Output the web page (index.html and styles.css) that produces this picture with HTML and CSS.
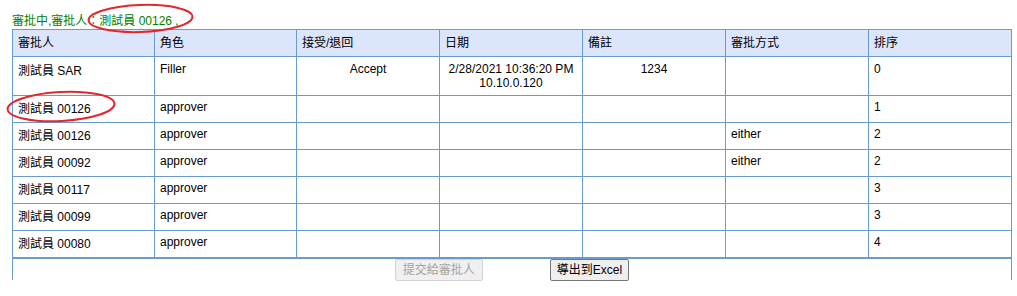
FILE: index.html
```html
<!DOCTYPE html>
<html lang="zh-Hant">
<head>
<meta charset="utf-8">
<title>審批</title>
<link rel="stylesheet" href="styles.css">
</head>
<body>
<div class="page">
  <div class="status">審批中,審批人：測試員 00126 ,</div>
  <table class="grid">
    <colgroup>
      <col class="w142"><col class="w142"><col class="w143"><col class="w143"><col class="w143"><col class="w143"><col class="w143">
    </colgroup>
    <thead>
      <tr>
        <th>審批人</th><th>角色</th><th>接受/退回</th><th>日期</th><th>備註</th><th>審批方式</th><th>排序</th>
      </tr>
    </thead>
    <tbody>
      <tr class="first">
        <td class="c1">測試員 SAR</td>
        <td>Filler</td>
        <td class="ctr">Accept</td>
        <td class="ctr date">2/28/2021 10:36:20 PM<br>10.10.0.120</td>
        <td class="ctr">1234</td>
        <td></td>
        <td>0</td>
      </tr>
      <tr><td class="c1">測試員 00126</td><td>approver</td><td></td><td></td><td></td><td></td><td>1</td></tr>
      <tr><td class="c1">測試員 00126</td><td>approver</td><td></td><td></td><td></td><td>either</td><td>2</td></tr>
      <tr><td class="c1">測試員 00092</td><td>approver</td><td></td><td></td><td></td><td>either</td><td>2</td></tr>
      <tr><td class="c1">測試員 00117</td><td>approver</td><td></td><td></td><td></td><td></td><td>3</td></tr>
      <tr><td class="c1">測試員 00099</td><td>approver</td><td></td><td></td><td></td><td></td><td>3</td></tr>
      <tr class="last"><td class="c1">測試員 00080</td><td>approver</td><td></td><td></td><td></td><td></td><td>4</td></tr>
    </tbody>
  </table>
  <div class="foot">
    <button class="btn" disabled>提交給審批人</button>
    <button class="btn">導出到Excel</button>
  </div>
  <svg class="marks" width="1017" height="296" viewBox="0 0 1017 296" aria-hidden="true">
    <ellipse cx="140.5" cy="18.5" rx="52" ry="13.5" transform="rotate(-2 140.5 18.5)"/>
    <ellipse cx="61" cy="106.5" rx="53.5" ry="14.5" transform="rotate(-3 61 106.5)"/>
  </svg>
</div>
</body>
</html>
```

FILE: styles.css
```css
html, body {
  margin: 0;
  padding: 0;
  background: #fff;
}

.page {
  position: relative;
  height: 281px;
  overflow: hidden;
  padding: 14px 0 0 12px;
  box-sizing: border-box;
  font-family: "Liberation Sans", "Noto Sans CJK TC", sans-serif;
  font-size: 12px;
  color: #000;
}

.status {
  height: 15px;
  line-height: 15px;
  color: #008000;
  white-space: nowrap;
}

.grid {
  width: 1000px;
  table-layout: fixed;
  border-collapse: collapse;
  border: 1px solid #6a9bcf;
  border-bottom: 2px solid #6a9bcf;
}

.w142 { width: 142px; }
.w143 { width: 143px; }

.grid th,
.grid td {
  border: 1px solid #6a9bcf;
  padding: 4px 5px 8px;
  line-height: 14px;
  vertical-align: top;
  text-align: left;
  font-weight: normal;
  white-space: nowrap;
}

.grid th {
  background: #dbe5fb;
  padding-top: 6px;
  padding-bottom: 6px;
}

.grid td.c1 {
  padding-top: 6px;
  padding-bottom: 6px;
}

.grid td.ctr {
  text-align: center;
}

.grid tr.first td {
  padding-top: 5px;
}

.grid tr.first td.c1 {
  padding-top: 7px;
}

.grid tr.first td.date {
  padding-bottom: 5px;
}

.grid tr.last td {
  border-bottom: 2px solid #6a9bcf;
}

.foot {
  width: 1000px;
  height: 21px;
  box-sizing: border-box;
  border-left: 1px solid #6a9bcf;
  border-right: 1px solid #6a9bcf;
  display: flex;
  justify-content: center;
  align-items: flex-start;
  gap: 67px;
}

.btn {
  flex: none;
  height: 22px;
  margin: 0;
  padding: 0 7px;
  font-family: "Liberation Sans", "Noto Sans CJK TC", sans-serif;
  font-size: 12px;
  line-height: 18px;
  color: #000;
  background: #efefef;
  border: 1px solid #767676;
  border-radius: 2px;
}

.btn + .btn {
  padding: 0 6px;
}

.btn:disabled {
  color: #a3a3a3;
  background: #f0f0f0;
  border-color: #d3d3d3;
}

.marks {
  position: absolute;
  left: 0;
  top: 0;
  pointer-events: none;
}

.marks ellipse {
  fill: none;
  stroke: #e0282e;
  stroke-width: 2;
}
```
